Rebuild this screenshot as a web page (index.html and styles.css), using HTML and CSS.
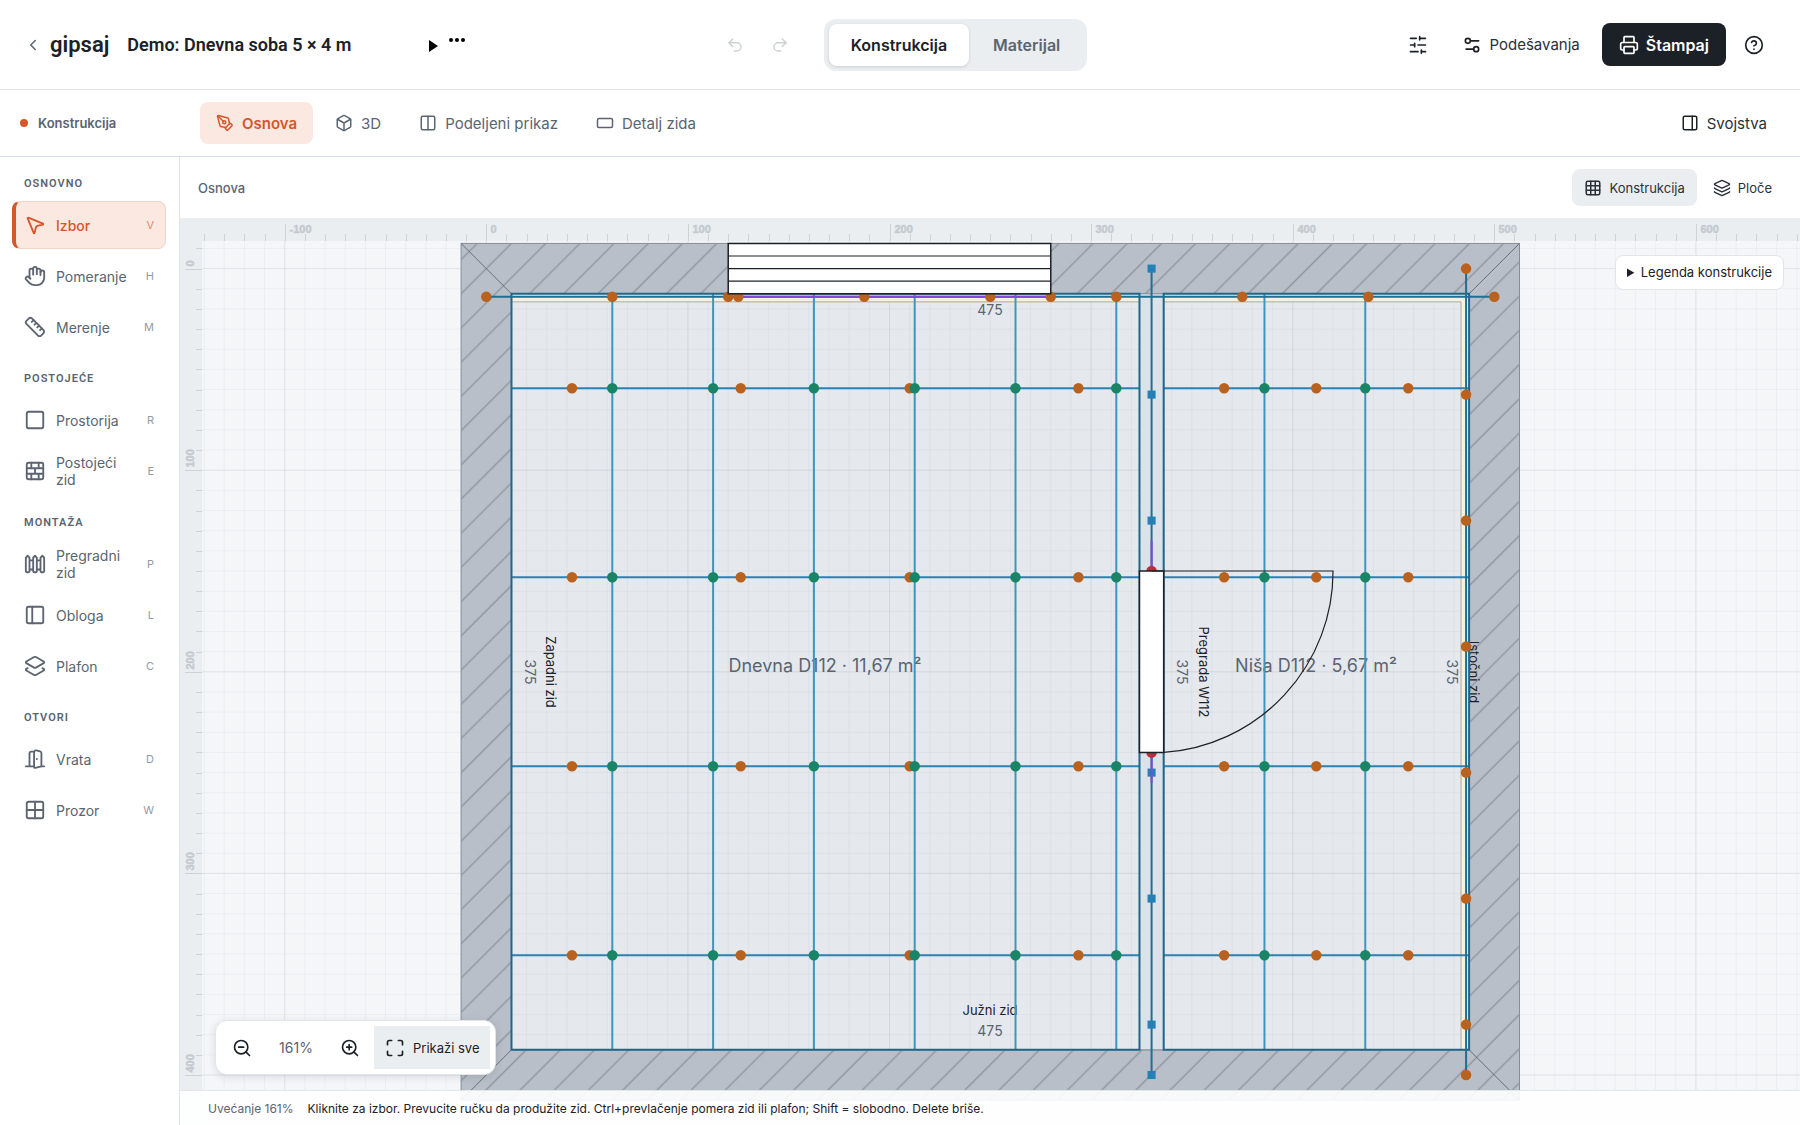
FILE: index.html
```html
<!DOCTYPE html>
<html lang="sr-Latn">
<head>
<meta charset="utf-8">
<meta name="viewport" content="width=device-width, initial-scale=1">
<title>gipsaj – Demo: Dnevna soba 5 × 4 m</title>
<link rel="stylesheet" href="styles.css">
</head>
<body>
<div class="app">
  <header class="topbar">
    <div class="topbar-left">
      <a class="brand" href="#">
        <svg class="icon icon-back" viewBox="0 0 24 24"><path d="m15 18-6-6 6-6"/></svg>
        <span>gipsaj</span>
      </a>
      <h1 class="project">Demo: Dnevna soba 5 × 4 m</h1>
      <button class="more" type="button" aria-label="Više">
        <svg class="more-mark" viewBox="0 0 36 20"><path d="M0 5v12l9-6z"/><circle cx="22" cy="5" r="2"/><circle cx="28" cy="5" r="2"/><circle cx="34" cy="5" r="2"/></svg>
      </button>
    </div>
    <div class="topbar-center">
      <div class="history">
        <button class="icon-btn" type="button" disabled aria-label="Poništi"><svg class="icon" viewBox="0 0 24 24"><path d="M9 14 4 9l5-5"/><path d="M4 9h10.500a5.500 5.500 0 0 1 0 11H11"/></svg></button>
        <button class="icon-btn" type="button" disabled aria-label="Ponovi"><svg class="icon" viewBox="0 0 24 24"><path d="m15 14 5-5-5-5"/><path d="M20 9H9.500a5.500 5.500 0 0 0 0 11H13"/></svg></button>
      </div>
      <div class="segmented">
        <button class="seg seg-active" type="button">Konstrukcija</button>
        <button class="seg" type="button">Materijal</button>
      </div>
    </div>
    <div class="topbar-right">
      <button class="icon-btn" type="button" aria-label="Filteri"><svg class="icon icon-lg" viewBox="0 0 24 24"><path d="M21 4h-7M10 4H3M21 12h-9M8 12H3M21 20h-5M12 20H3M14 2v4M8 10v4M16 18v4"/></svg></button>
      <button class="text-btn" type="button"><svg class="icon icon-lg" viewBox="0 0 24 24"><path d="M20 7h-9M14 17H5"/><circle cx="17" cy="17" r="3"/><circle cx="7" cy="7" r="3"/></svg>Podešavanja</button>
      <button class="print-btn" type="button"><svg class="icon icon-lg" viewBox="0 0 24 24"><path d="M6 18H4a2 2 0 0 1-2-2v-5a2 2 0 0 1 2-2h16a2 2 0 0 1 2 2v5a2 2 0 0 1-2 2h-2"/><path d="M6 9V3a1 1 0 0 1 1-1h10a1 1 0 0 1 1 1v6"/><rect x="6" y="14" width="12" height="8" rx="1"/></svg>Štampaj</button>
      <button class="icon-btn" type="button" aria-label="Pomoć"><svg class="icon icon-lg" viewBox="0 0 24 24"><circle cx="12" cy="12" r="10"/><path d="M9.090 9a3 3 0 0 1 5.830 1c0 2-3 3-3 3M12 17h.01"/></svg></button>
    </div>
  </header>

  <nav class="viewbar">
    <div class="mode"><span class="mode-dot"></span>Konstrukcija</div>
    <div class="tabs">
      <button class="tab tab-active" type="button"><svg class="icon" viewBox="0 0 24 24"><path d="M15.707 21.293a1 1 0 0 1-1.414 0l-1.586-1.586a1 1 0 0 1 0-1.414l5.586-5.586a1 1 0 0 1 1.414 0l1.586 1.586a1 1 0 0 1 0 1.414z"/><path d="m18 13-1.375-6.874a1 1 0 0 0-.746-.776L3.235 2.028a1 1 0 0 0-1.207 1.207L5.350 15.879a1 1 0 0 0 .776.746L13 18"/><path d="m2.300 2.300 7.286 7.286"/><circle cx="11" cy="11" r="2"/></svg>Osnova</button>
      <button class="tab" type="button"><svg class="icon" viewBox="0 0 24 24"><path d="M21 8a2 2 0 0 0-1-1.730l-7-4a2 2 0 0 0-2 0l-7 4A2 2 0 0 0 3 8v8a2 2 0 0 0 1 1.730l7 4a2 2 0 0 0 2 0l7-4A2 2 0 0 0 21 16Z"/><path d="m3.300 7 8.700 5 8.700-5M12 22V12"/></svg>3D</button>
      <button class="tab" type="button"><svg class="icon" viewBox="0 0 24 24"><rect x="3" y="3" width="18" height="18" rx="2"/><path d="M12 3v18"/></svg>Podeljeni prikaz</button>
      <button class="tab" type="button"><svg class="icon" viewBox="0 0 24 24"><rect x="2" y="6" width="20" height="12" rx="2"/></svg>Detalj zida</button>
    </div>
    <button class="text-btn" type="button"><svg class="icon" viewBox="0 0 24 24"><rect x="3" y="3" width="18" height="18" rx="2"/><path d="M15 3v18"/></svg>Svojstva</button>
  </nav>

  <div class="body">
    <aside class="tools">
      <h2 class="tools-title">OSNOVNO</h2>
      <div class="tools-group">
        <button class="tool tool-active" type="button"><svg class="icon" viewBox="0 0 24 24"><path d="M4.037 4.688a.495.495 0 0 1 .651-.651l16 6.500a.5.500 0 0 1-.063.947l-6.124 1.580a2 2 0 0 0-1.438 1.435l-1.579 6.126a.5.500 0 0 1-.947.063z"/></svg><span class="tool-name">Izbor</span><kbd>V</kbd></button>
        <button class="tool" type="button"><svg class="icon" viewBox="0 0 24 24"><path d="M18 11V6a2 2 0 0 0-4 0M14 10V4a2 2 0 0 0-4 0v2M10 10.500V6a2 2 0 0 0-4 0v8"/><path d="M18 8a2 2 0 1 1 4 0v6a8 8 0 0 1-8 8h-2c-2.800 0-4.500-.860-5.990-2.340l-3.600-3.600a2 2 0 0 1 2.830-2.820L7 15"/></svg><span class="tool-name">Pomeranje</span><kbd>H</kbd></button>
        <button class="tool" type="button"><svg class="icon" viewBox="0 0 24 24"><path d="M21.300 15.300a2.400 2.400 0 0 1 0 3.400l-2.600 2.600a2.400 2.400 0 0 1-3.400 0L2.700 8.700a2.410 2.410 0 0 1 0-3.400l2.600-2.600a2.410 2.410 0 0 1 3.400 0Z"/><path d="m14.500 12.500 2-2M11.500 9.500l2-2M8.500 6.500l2-2M17.500 15.500l2-2"/></svg><span class="tool-name">Merenje</span><kbd>M</kbd></button>
      </div>
      <h2 class="tools-title">POSTOJEĆE</h2>
      <div class="tools-group">
        <button class="tool" type="button"><svg class="icon" viewBox="0 0 24 24"><rect x="3" y="3" width="18" height="18" rx="2"/></svg><span class="tool-name">Prostorija</span><kbd>R</kbd></button>
        <button class="tool" type="button"><svg class="icon" viewBox="0 0 24 24"><rect x="3" y="3" width="18" height="18" rx="2"/><path d="M12 9v6M16 15v6M16 3v6M3 15h18M3 9h18M8 15v6M8 3v6"/></svg><span class="tool-name">Postojeći zid</span><kbd>E</kbd></button>
      </div>
      <h2 class="tools-title">MONTAŽA</h2>
      <div class="tools-group">
        <button class="tool" type="button"><svg class="icon" viewBox="0 0 24 24"><path d="M4 3 2 5v15c0 .6.4 1 1 1h2c.6 0 1-.4 1-1V5ZM6 8h4M6 18h4M12 3l-2 2v15c0 .6.4 1 1 1h2c.6 0 1-.4 1-1V5ZM14 8h4M14 18h4M20 3l-2 2v15c0 .6.4 1 1 1h2c.6 0 1-.4 1-1V5Z"/></svg><span class="tool-name">Pregradni zid</span><kbd>P</kbd></button>
        <button class="tool" type="button"><svg class="icon" viewBox="0 0 24 24"><rect x="3" y="3" width="18" height="18" rx="2"/><path d="M9 3v18"/></svg><span class="tool-name">Obloga</span><kbd>L</kbd></button>
        <button class="tool" type="button"><svg class="icon" viewBox="0 0 24 24"><path d="M13 13.740a2 2 0 0 1-2 0L2.500 8.870a1 1 0 0 1 0-1.740L11 2.260a2 2 0 0 1 2 0l8.500 4.870a1 1 0 0 1 0 1.740z"/><path d="m20 14.285 1.500.845a1 1 0 0 1 0 1.740L13 21.740a2 2 0 0 1-2 0l-8.500-4.870a1 1 0 0 1 0-1.740l1.500-.845"/></svg><span class="tool-name">Plafon</span><kbd>C</kbd></button>
      </div>
      <h2 class="tools-title">OTVORI</h2>
      <div class="tools-group">
        <button class="tool" type="button"><svg class="icon" viewBox="0 0 24 24"><path d="M11 20H2M11 4.562v16.157a1 1 0 0 0 1.242.970L19 20V5.562a2 2 0 0 0-1.515-1.940l-4-1A2 2 0 0 0 11 4.561zM11 4H8a2 2 0 0 0-2 2v14M14 12h.01M22 20h-3"/></svg><span class="tool-name">Vrata</span><kbd>D</kbd></button>
        <button class="tool" type="button"><svg class="icon" viewBox="0 0 24 24"><rect x="3" y="3" width="18" height="18" rx="2"/><path d="M12 3v18M3 12h18"/></svg><span class="tool-name">Prozor</span><kbd>W</kbd></button>
      </div>
    </aside>

    <main class="view">
      <div class="view-head">
        <h2 class="view-title">Osnova</h2>
        <div class="layers">
          <button class="layer layer-active" type="button"><svg class="icon" viewBox="0 0 24 24"><rect x="3" y="3" width="18" height="18" rx="2"/><path d="M3 9h18M3 15h18M9 3v18M15 3v18"/></svg>Konstrukcija</button>
          <button class="layer" type="button"><svg class="icon" viewBox="0 0 24 24"><path d="M12.830 2.180a2 2 0 0 0-1.660 0L2.600 6.080a1 1 0 0 0 0 1.830l8.580 3.910a2 2 0 0 0 1.660 0l8.580-3.900a1 1 0 0 0 0-1.830z"/><path d="M2 12a1 1 0 0 0 .580.910l8.600 3.910a2 2 0 0 0 1.650 0l8.580-3.900A1 1 0 0 0 22 12"/><path d="M2 17a1 1 0 0 0 .580.910l8.600 3.910a2 2 0 0 0 1.650 0l8.580-3.900A1 1 0 0 0 22 17"/></svg>Ploče</button>
        </div>
      </div>
      <div class="canvas">
        <svg class="plan" id="plan" role="img" aria-label="Osnova prostorije">
          <defs>
            <pattern id="hatch" width="12" height="12" patternUnits="userSpaceOnUse" patternTransform="rotate(45) translate(-6 0)">
              <path class="hatch" d="M6-1v14"/>
            </pattern>
          </defs>
          <g id="world"></g>
          <g id="labels">
            <text class="dim" x="810" y="97">475</text>
            <text class="wall-name" x="810" y="797">Južni zid</text>
            <text class="dim" x="810" y="818">475</text>
            <text class="room-name" x="645" y="454">Dnevna D112 · 11,67 m²</text>
            <text class="room-name" x="1136" y="454">Niša D112 · 5,67 m²</text>
            <text class="dim" transform="translate(345 454) rotate(90)">375</text>
            <text class="wall-name" transform="translate(366 454) rotate(90)">Zapadni zid</text>
            <text class="dim" transform="translate(997 454) rotate(90)">375</text>
            <text class="wall-name" transform="translate(1019 454) rotate(90)">Pregrada W112</text>
            <text class="dim" transform="translate(1267 454) rotate(90)">375</text>
            <text class="wall-name" transform="translate(1289 454) rotate(90)">Istočni zid</text>
          </g>
          <g id="frame"></g>
          <g id="rulers"></g>
        </svg>
        <details class="legend"><summary>Legenda konstrukcije</summary></details>
        <div class="zoombar">
          <button class="zoom-btn" type="button" aria-label="Umanji"><svg class="icon icon-lg" viewBox="0 0 24 24"><circle cx="11" cy="11" r="8"/><path d="m21 21-4.350-4.350M8 11h6"/></svg></button>
          <span class="zoom-value">161%</span>
          <button class="zoom-btn" type="button" aria-label="Uvećaj"><svg class="icon icon-lg" viewBox="0 0 24 24"><circle cx="11" cy="11" r="8"/><path d="m21 21-4.350-4.350M11 8v6M8 11h6"/></svg></button>
          <button class="fit-btn" type="button"><svg class="icon icon-lg" viewBox="0 0 24 24"><path d="M8 3H5a2 2 0 0 0-2 2v3M21 8V5a2 2 0 0 0-2-2h-3M3 16v3a2 2 0 0 0 2 2h3M16 21h3a2 2 0 0 0 2-2v-3"/></svg>Prikaži sve</button>
        </div>
        <footer class="status"><span class="status-zoom">Uvećanje 161%</span><span>Kliknite za izbor. Prevucite ručku da produžite zid. Ctrl+prevlačenje pomera zid ili plafon; Shift = slobodno. Delete briše.</span></footer>
      </div>
    </main>
  </div>
</div>
<script src="script.js"></script>
</body>
</html>
```
FILE: styles.css
```css
* { box-sizing: border-box; }
body { margin: 0; font-family: Inter, "Noto Sans", sans-serif; font-size: 15px; color: #1c2127; background: #fff; }
button { font: inherit; color: inherit; background: none; border: 0; padding: 0; margin: 0; display: inline-flex; align-items: center; white-space: nowrap; }
h1, h2 { margin: 0; }
.icon { width: 18px; height: 18px; flex: none; fill: none; stroke: currentColor; stroke-width: 2; stroke-linecap: round; stroke-linejoin: round; }
.icon-lg { width: 20px; height: 20px; }

.app { display: flex; flex-direction: column; height: 100vh; }

.topbar { display: grid; grid-template-columns: 1fr auto 1fr; align-items: center; height: 90px; flex: none; padding: 0 24px; border-bottom: 1px solid #e2e6e9; }
.topbar-left { display: flex; align-items: center; }
.brand { display: flex; align-items: center; gap: 8px; color: inherit; text-decoration: none; font: 600 22px/28px Roboto, sans-serif; margin-right: 18px; }
.icon-back { color: #5b6470; }
.project { font: 600 18px/24px Roboto, sans-serif; width: 302px; }
.more { height: 24px; }
.more-mark { width: 36px; height: 20px; }
.topbar-center { display: flex; align-items: center; gap: 22px; }
.history { display: flex; gap: 1px; }
.icon-btn { width: 44px; height: 44px; justify-content: center; }
.icon-btn:disabled { color: #cdd1d5; }
.segmented { display: flex; gap: 2px; padding: 5px; border-radius: 12px; background: #ebeef1; }
.seg { height: 42px; padding: 0 22px; border-radius: 8px; font-size: 16px; font-weight: 600; color: #5b6470; }
.seg-active { background: #fff; color: #1c2127; box-shadow: 0 1px 3px rgba(28, 33, 39, .15); }
.topbar-right { display: flex; align-items: center; justify-content: flex-end; gap: 6px; }
.text-btn { gap: 8px; height: 42px; padding: 0 16px; color: #2a3038; }
.text-btn .icon { color: #1c2127; }
.print-btn { gap: 7px; height: 43px; padding: 0 17px; border-radius: 8px; background: #1c2127; color: #fff; font-size: 16px; font-weight: 600; }

.viewbar { display: flex; align-items: center; height: 67px; flex: none; padding-right: 17px; border-bottom: 1px solid #d9dfe4; }
.mode { display: flex; align-items: center; gap: 10px; width: 200px; padding-left: 20px; font-size: 13px; font-weight: 600; color: #5b6470; }
.mode-dot { width: 8px; height: 8px; border-radius: 50%; background: #d4562a; }
.tabs { display: flex; gap: 6px; flex: 1; }
.tab { gap: 8px; height: 42px; padding: 0 16px; border-radius: 8px; color: #5b6470; }
.tab-active { background: #fbe8e0; color: #d4562a; font-weight: 600; }

.body { display: flex; flex: 1; min-height: 0; }
.tools { width: 180px; flex: none; padding: 20px 13px 20px 12px; border-right: 1px solid #e2e6e9; overflow: hidden; }
.tools-title { margin: 0 0 10px 12px; font: 600 11px/14px Roboto, sans-serif; letter-spacing: 1px; color: #5b6470; }
.tools-group { display: flex; flex-direction: column; gap: 3px; margin-bottom: 21px; }
.tool { width: 100%; height: 48px; gap: 10px; padding: 0 11px 0 8px; border: 1px solid transparent; border-left-width: 4px; border-radius: 8px; color: #5b6470; text-align: left; font-size: 14px; line-height: 17px; }
.tool .icon { width: 22px; height: 22px; }
.tool-active { border-color: #f3d3c6; border-left-color: #d4562a; background: #fbe8e0; color: #d4562a; font-weight: 500; }
.tool-name { flex: 1; white-space: normal; }
kbd { font: 400 11px/14px Inter, sans-serif; opacity: .65; }

.view { display: flex; flex-direction: column; flex: 1; min-width: 0; }
.view-head { display: flex; align-items: center; justify-content: space-between; height: 61px; flex: none; padding: 0 16px 0 18px; }
.view-title { font-size: 13px; font-weight: 500; color: #5b6470; }
.layers { display: flex; gap: 4px; }
.layer { gap: 7px; height: 37px; padding: 0 12px; border-radius: 8px; font-size: 13px; color: #2a3038; }
.layer-active { background: #ebeef1; }

.canvas { position: relative; flex: 1; min-height: 0; overflow: hidden; background: #f4f6f8; }
.plan { display: block; width: 100%; height: 100%; }
.plan path, .plan rect, .plan circle { vector-effect: non-scaling-stroke; fill: none; }
.plan .hatch { stroke: #8e96a1; stroke-width: .7; vector-effect: none; }
.plan .room { fill: #e5e9ee; }
.plan .grid { stroke: rgba(60, 75, 95, .045); }
.plan .grid-major { stroke: rgba(60, 75, 95, .11); }
.plan .wall { fill: #b8bfc8; stroke: #858d99; stroke-width: 1; }
.plan .wall-hatch { fill: url(#hatch); }
.plan .miter { stroke: #666e7a; }
.plan .partition { fill: #dce2ea; stroke: #858d99; }
.plan .board { fill: #f3f1e3; }
.plan .board-edge { stroke: #b9a88c; }
.plan .outline { stroke: #1f6689; stroke-width: 2; }
.plan .carrier { stroke: #2b83b5; stroke-width: 2; }
.plan .profile { stroke: #3f95bd; stroke-width: 2; }
.plan .track { stroke: #1f6f93; stroke-width: 2; }
.plan .lintel { stroke: #8347d8; stroke-width: 2; }
.plan .opening { fill: #fff; stroke: #1c2127; stroke-width: 1.5; }
.plan .thin { stroke: #1c2127; stroke-width: 1.2; }
.plan .stud { fill: #b9621f; }
.plan .joint { fill: #1a8466; }
.plan .jamb { fill: #b5303f; }
.plan .post { fill: #2381b8; }
.plan text { text-anchor: middle; font-size: 14px; }
.plan .dim { fill: #5b6470; }
.plan .wall-name { fill: #1c2127; font-size: 13px; }
.plan .room-name { fill: #5b6470; font-size: 18px; }
.plan .ruler-bg { fill: #ebeef1; }
.plan .ruler-tick { stroke: #cdd2d7; }
.plan .ruler-num { fill: #c5cad0; stroke: #c5cad0; stroke-width: .5; font: 700 11px "Liberation Sans", sans-serif; text-anchor: start; }

.legend { position: absolute; top: 37px; right: 16px; padding: 0 11px; border: 1px solid #e2e6e9; border-radius: 8px; background: #fff; font-size: 13px; line-height: 33px; }
.zoombar { position: absolute; left: 35px; bottom: 50px; display: flex; align-items: center; height: 55px; padding: 5px; border: 1px solid #e2e6e9; border-radius: 12px; background: #fff; box-shadow: 0 2px 8px rgba(28, 33, 39, .12); }
.zoom-btn { width: 42px; height: 43px; justify-content: center; }
.zoom-value { width: 66px; text-align: center; font-size: 14px; color: #5b6470; }
.fit-btn { height: 43px; gap: 8px; padding: 0 11px; margin-left: 3px; background: #ebeef1; font-size: 13px; }
.status { position: absolute; left: 0; right: 0; bottom: 0; display: flex; align-items: center; gap: 14px; height: 35px; padding-left: 28px; border-top: 1px solid #e2e6e9; background: rgba(255, 255, 255, .9); font-size: 12px; white-space: nowrap; }
.status-zoom { color: #5b6470; }
```
FILE: script.js
```js
// World units are centimetres; the view is panned and scaled to screen pixels.
const SCALE = 2.016, PAN_X = 306.3, PAN_Y = 50.6;
const RULER_W = 22, RULER_H = 23;
const range = (a, b, step) => { const r = []; for (let v = a; v <= b; v += step) r.push(v); return r; };
const path = (cls, d) => `<path class="${cls}" d="${d}"/>`;
const rect = (cls, x, y, w, h) => `<rect class="${cls}" x="${x}" y="${y}" width="${w}" height="${h}"/>`;
const dot = (cls, x, y) => `<circle class="${cls}" cx="${x}" cy="${y}" r="2.6"/>`;

const carriers = [59.375, 153.125, 246.875, 340.625];
const living = { profiles: [62.5, 112.5, 162.5, 212.5, 262.5, 312.5], hangers: [42.5, 126.2, 210, 293.7] };
const niche = { profiles: [386, 436], hangers: [366, 411.7, 457.3] };

function base() {
  let s = rect('room', 12.5, 12.5, 475, 375);
  s += path('grid', range(-150, 800, 10).filter(v => v % 100).map(v => `M${v}-50V500`).join('') +
    range(-20, 490, 10).filter(v => v % 100).map(v => `M-160 ${v}H800`).join(''));
  s += path('grid grid-major', range(-100, 800, 100).map(v => `M${v}-50V500`).join('') +
    range(0, 400, 100).map(v => `M-160 ${v}H800`).join(''));
  const ring = 'M-12.5-12.5H512.5V412.5H-12.5ZM12.5 12.5V387.5H487.5V12.5Z';
  s += path('wall', ring) + path('wall-hatch', ring);
  s += path('miter', 'M-12.5-12.5L12.5 12.5M512.5-12.5L487.500 12.5M-12.5 412.5L12.5 387.5M512.5 412.5L487.500 387.5');
  s += rect('partition', 324, 12.5, 12, 375);
  s += rect('board', 12.5, 12.5, 311.5, 4) + rect('board', 336, 12.5, 150, 4) + rect('board', 483.5, 12.5, 4, 375);
  s += path('board-edge', 'M12.5 16.5H324M336 16.5H483.5V387.5');
  return s;
}

function frame() {
  let s = path('carrier', carriers.map(y => `M12.5 ${y}H324M336 ${y}H487.5`).join(''));
  s += path('profile', [...living.profiles, ...niche.profiles].map(x => `M${x} 12.5V387.5`).join(''));
  s += path('outline', 'M12.5 12.5H324V387.5H12.5ZM336 12.5H487.5V387.5H336Z');
  s += path('track', 'M0 14H500M486 0V400M330 0V400');
  s += path('lintel', 'M120 14H280');
  for (const y of carriers) {
    s += [...living.hangers, ...niche.hangers].map(x => dot('stud', x, y)).join('');
    s += [...living.profiles, ...niche.profiles].map(x => dot('joint', x, y)).join('');
  }
  s += [0, 62.5, 120, 125, 187.5, 250, 280, 312.5, 375, 437.5, 500].map(x => dot('stud', x, 14)).join('');
  s += [0, 62.5, 125, 187.5, 250, 312.5, 375, 400].map(y => dot('stud', 486, y)).join('');
  s += [0, 62.5, 125, 250, 312.5, 375, 400].map(y => rect('post', 328, y - 2, 4, 4)).join('');
  s += path('lintel', 'M330 135V150M330 240V255');
  s += dot('jamb', 330, 150) + dot('jamb', 330, 240);
  s += rect('opening', 120, -12.5, 160, 25) + path('thin', 'M120-6.25H280M120 0H280M120 6.25H280');
  s += rect('opening', 324, 150, 12, 90) + path('thin', 'M330 150H420A90 90 0 0 1 336 240');
  return s;
}

function rulers() {
  const x = v => Math.round(PAN_X + v * SCALE) + .5, y = v => Math.round(PAN_Y + v * SCALE) + .5;
  let s = `<path class="ruler-bg" d="M0 0H4000V${RULER_H}H${RULER_W}V4000H0Z"/>`;
  const xs = range(-140, 690, 10), ys = range(-10, 490, 10);
  s += path('ruler-tick', xs.map(v => `M${x(v)} ${v % 100 ? 16 : 6}V${RULER_H}`).join('') +
    ys.map(v => `M${v % 100 ? 16 : 5} ${y(v)}H${RULER_W}`).join(''));
  s += xs.filter(v => v % 100 === 0).map(v => `<text class="ruler-num" x="${x(v) + 4}" y="15">${v}</text>`).join('');
  s += ys.filter(v => v % 100 === 0).map(v => `<text class="ruler-num" transform="translate(14 ${y(v) - 3}) rotate(-90)">${v}</text>`).join('');
  return s;
}

const view = `translate(${PAN_X} ${PAN_Y}) scale(${SCALE})`;
for (const id of ['world', 'frame']) document.getElementById(id).setAttribute('transform', view);
document.getElementById('world').innerHTML = base();
document.getElementById('frame').innerHTML = frame();
document.getElementById('rulers').innerHTML = rulers();
```
